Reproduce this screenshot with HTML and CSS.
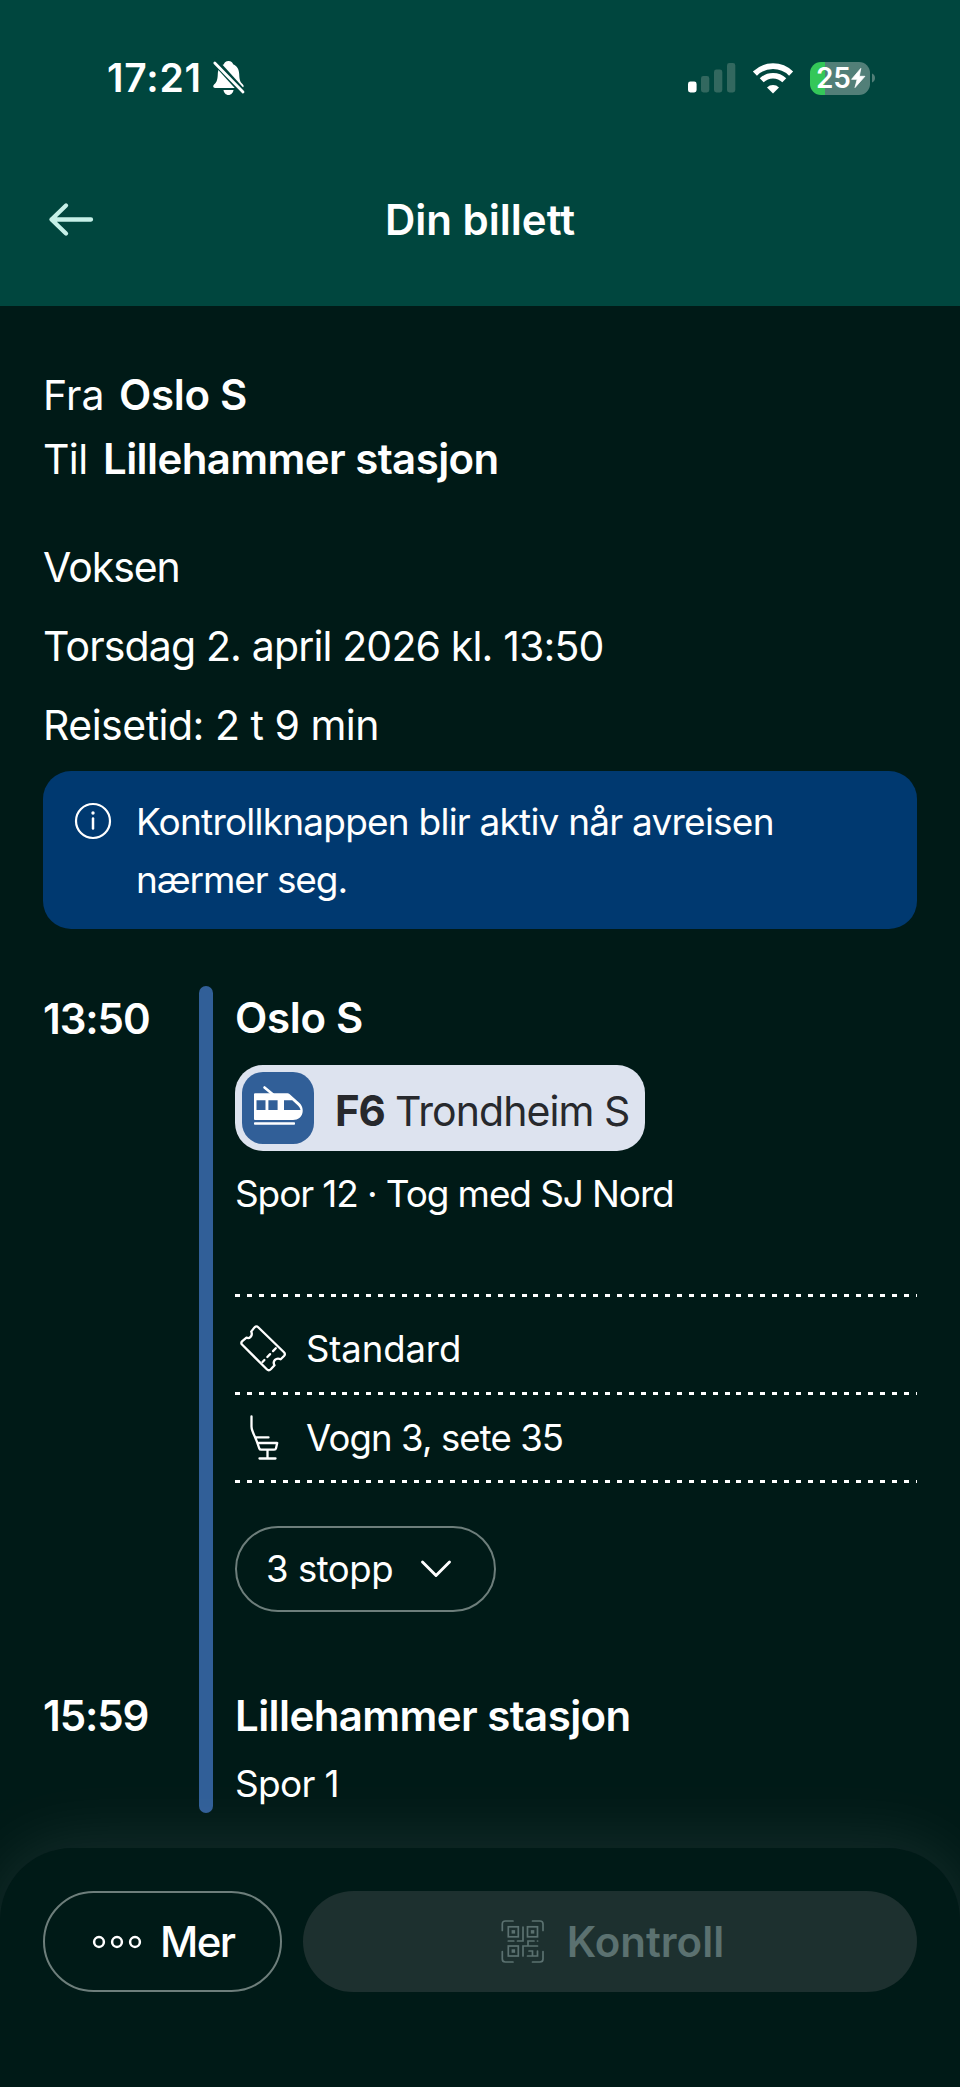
FILE: index.html
```html
<!DOCTYPE html>
<html lang="no">
<head>
<meta charset="utf-8">
<title>Din billett</title>
<link rel="stylesheet" href="styles.css">
</head>
<body>
<header class="header">
  <div class="status">
    <div class="status-left">
      <span class="clock">17:21</span>
      <svg class="bell" width="32" height="36" viewBox="0 0 32 36" fill="#fff">
        <path d="M15.5 1c-2.600 0-4.200 1.500-4.600 3.300C6.500 6 5 9.800 4.800 14c-.2 5.500-.9 8-3.500 10.300C-.5 26 .2 28 2 28h26.500c2 0 3-2 1.200-3.700C27 21.800 26.400 19.500 26.200 14 26 9.800 24.500 6 20.100 4.300 19.700 2.500 18.100 1 15.500 1zM10.500 30h10c-.3 2.800-2.400 5-5 5s-4.700-2.200-5-5z"/>
        <path d="M-1 2L28.500 34.500" transform="translate(1.500 -2.200)" stroke="#00463e" stroke-width="6.500" fill="none"/>
        <path d="M1.800 3L30 32" stroke="#fff" stroke-width="2.800" stroke-linecap="round"/>
      </svg>
    </div>
    <div class="status-right">
      <svg width="48" height="30" viewBox="0 0 48 30">
        <rect x="0" y="18.500" width="8.600" height="11" rx="2.400" fill="#fff"/>
        <g fill="#32685f"><rect x="13" y="13" width="8.300" height="16.500" rx="2.400"/><rect x="26" y="6.500" width="8.300" height="23" rx="2.400"/><rect x="39" y="0" width="8.300" height="29.500" rx="2.400"/></g>
      </svg>
      <svg class="wifi" width="42" height="32" viewBox="0 0 42 32" fill="none" stroke="#fff" stroke-width="6">
        <path d="M2.900 11.600a25.800 25.800 0 0 1 36.200 0" stroke-width="5.800"/>
        <path d="M9.700 18.300a16.200 16.200 0 0 1 22.600 0" stroke-width="5.600"/>
        <path d="M21 31.500l-6-6.100a8.500 8.500 0 0 1 12 0z" fill="#fff" stroke="none"/>
      </svg>
      <div class="battery">
        <span class="level">25</span>
        <svg width="15" height="20" viewBox="0 0 15 20" fill="#fff"><path d="M9.800.4L.6 11.300h5.600L4 19.600l9.900-11.300H8.300z" stroke="#fff" stroke-width=".8" stroke-linejoin="round"/></svg>
      </div>
      <svg class="nub" width="4" height="12" viewBox="0 0 4 12"><path d="M0 1.500c4 1.500 4 7.500 0 9z" fill="#527f78"/></svg>
    </div>
  </div>
  <div class="nav">
    <svg width="46" height="34" viewBox="0 0 46 34" fill="none" stroke="#c6f0e8" stroke-width="4.300" stroke-linecap="round" stroke-linejoin="round"><path d="M43 16.500H3.500M18 2.500L3.500 16.500l14.500 14"/></svg>
    <h1 class="title">Din billett</h1>
  </div>
</header>

<main class="main">
  <div class="place from"><span class="lead">Fra</span><strong class="stop">Oslo S</strong></div>
  <div class="place to"><span class="lead">Til</span><strong class="stop long">Lillehammer stasjon</strong></div>

  <div class="details">
    <p class="voksen">Voksen</p>
    <p class="date">Torsdag 2. april 2026 kl. 13:50</p>
    <p class="duration">Reisetid: 2 t 9 min</p>
  </div>

  <div class="notice">
    <svg width="38" height="38" viewBox="0 0 38 38" fill="none" stroke="#fff" stroke-width="2.200"><circle cx="19" cy="19" r="17"/><path d="M19 16.500v10" stroke-width="2.500" stroke-linecap="round"/><circle cx="19" cy="11" r="1.700" fill="#fff" stroke="none"/></svg>
    <p>Kontrollknappen blir aktiv når avreisen <span class="tight">nærmer seg.</span></p>
  </div>

  <section class="trip">
    <div class="times"><time>13:50</time><time>15:59</time></div>
    <div class="line"></div>
    <div class="leg">
      <h2 class="stop">Oslo S</h2>
      <div class="route">
        <svg width="72" height="72" viewBox="0 0 72 72">
          <rect width="72" height="72" rx="21" fill="#315f98"/>
          <path d="M22.500 15.500l8.500 7" stroke="#fff" stroke-width="2.600" stroke-linecap="round"/>
          <path fill="#fff" fill-rule="evenodd" d="M13 21.300h31.500c1.500 0 2.700.5 3.800 1.400l9.200 8.400c5.500 5 4.500 16.900-6.500 16.900H13a1 1 0 0 1-1-1V22.300a1 1 0 0 1 1-1zM14.500 28.300v9.700h9v-9.700zM26.400 28.300v9.700h9.200v-9.700zM42 28.300V38h16.500c-.4-1.800-1.300-3.300-2.600-4.500l-5.700-5.200z"/>
          <rect x="12" y="50.300" width="41" height="2.500" rx=".8" fill="#fff"/>
        </svg>
        <span class="route-name"><b>F6</b> Trondheim S</span>
      </div>
      <p class="info">Spor 12 · Tog med SJ Nord</p>
      <div class="rows">
        <div class="row standard">
          <svg width="54" height="52" viewBox="0 0 54 52" fill="none" stroke="#fff" stroke-width="2.300" stroke-linejoin="round" stroke-linecap="round"><path d="M7.300 18.200l4.200-3.600c2.500 1.500 6.800-1.500 4.700-6l3.300-4.200c1.200-1.400 2.700-1.200 3.700-.2L49 29.300c1.300 1.400 1 2.600 0 3.700l-3.300 3.300c-4.600-2.200-8.600 1.800-6.200 6l-3.700 4c-1.300 1.300-2.700 1.300-4 0L7 21.500c-1-1.200-.8-2.300.3-3.300z"/><path d="M41.500 24.500L27.500 39" stroke-dasharray="4 4.200" stroke-dashoffset="-1"/></svg>
          <span>Standard</span>
        </div>
        <div class="row seat">
          <svg width="54" height="46" viewBox="0 0 54 46" fill="none" stroke="#fff" stroke-width="2.300" stroke-linejoin="round" stroke-linecap="round"><path d="M16.500 1.500v10c0 1.500 1.800 7 3.500 10.500 3 7 3.300 9 4.300 11.500.3.800 1 1.200 1.800 1.200h13c1 0 1.700-.5 1.900-1.500l1.200-5.200H23M20.500 22.400h13M32.500 35v8.500M24.500 43.500h16"/></svg>
          <span>Vogn 3, sete 35</span>
        </div>
      </div>
      <button class="stops"><span>3 stopp</span><svg width="32" height="20" viewBox="0 0 32 20" fill="none" stroke="#fff" stroke-width="2.900" stroke-linecap="round" stroke-linejoin="round"><path d="M2.500 3L16 16.500 29.500 3"/></svg></button>
      <h2 class="stop long arrival">Lillehammer stasjon</h2>
      <p class="info platform">Spor 1</p>
    </div>
  </section>
</main>

<footer class="sheet">
  <button class="more"><svg width="50" height="14" viewBox="0 0 50 14" fill="none" stroke="#fff" stroke-width="2.500"><circle cx="7" cy="7" r="4.900"/><circle cx="25" cy="7" r="4.900"/><circle cx="43" cy="7" r="4.900"/></svg><span>Mer</span></button>
  <button class="control">
    <svg width="43" height="43" viewBox="0 0 43 43" fill="none" stroke="#5b7170" stroke-width="1.700" stroke-linecap="round"><path d="M1.300 10.500V4q0-3 3-3H12M31.500 1H39q3 0 3 3v6.500M1.300 31.500V39q0 3 3 3H12M31.500 42H39q3 0 3-3v-7.500"/><rect x="7.300" y="6.800" width="10" height="10"/><rect x="26.500" y="6.800" width="10" height="10"/><rect x="7.300" y="26" width="10" height="10"/><path d="M22 7v14h-5.500M7.300 21h5.500M36.500 21h.1M33 21h-6v5M22 36V26h14.500M28 31h3.500v5M26.500 36h10v-5"/><g fill="#5b7170" stroke="none"><rect x="10.600" y="10.100" width="3.500" height="3.500"/><rect x="29.800" y="10.100" width="3.500" height="3.500"/><rect x="10.600" y="29.300" width="3.500" height="3.500"/></g></svg>
    <span>Kontroll</span>
  </button>
</footer>
</body>
</html>
```
FILE: styles.css
```css
* { box-sizing: border-box; margin: 0; padding: 0; }
body {
  width: 960px;
  min-height: 2087px;
  overflow: hidden;
  background: #001a17;
  color: #fff;
  font-family: Inter, "Liberation Sans", sans-serif;
  font-size: 41px;
}
svg { display: block; flex: none; overflow: visible; }
button { font: inherit; color: inherit; background: none; border: 0; }

.header { height: 306px; background: #00463e; }
.status { height: 156px; display: flex; justify-content: space-between; align-items: center; padding: 0 84px 0 107px; }
.status-left, .status-right { display: flex; align-items: center; }
.clock { font-size: 39px; font-weight: 600; letter-spacing: .8px; line-height: 50px; }
.bell { margin-left: 11px; }
.wifi { margin-left: 16px; }
.battery {
  width: 60px; height: 33px; margin-left: 16px; padding-left: 6px;
  display: flex; align-items: center; gap: 1px;
  border-radius: 11px;
  background: linear-gradient(90deg, #34c759 15px, #527f78 15px);
}
.level { font-size: 28px; font-weight: 600; line-height: 33px; letter-spacing: -.3px; }
.nub { margin-left: 2px; }
.nav { height: 127px; display: grid; grid-template-columns: 46px 1fr 46px; align-items: center; padding: 0 48px; }
.title { font-size: 42px; font-weight: 600; text-align: center; line-height: 60px; }

.main { padding: 57px 43px 0; }
.place { display: flex; line-height: 64px; }
.lead { width: 76px; }
.to .lead { width: 60px; letter-spacing: -.6px; }
.stop { font-size: 42px; font-weight: 600; line-height: 64px; letter-spacing: -.3px; }
.long { letter-spacing: -.58px; }
.details { margin-top: 36.500px; line-height: 79px; }
.voksen { letter-spacing: -1.050px; }
.date { letter-spacing: -.85px; }
.duration { letter-spacing: -.5px; }

.notice {
  margin-top: 6.500px; height: 158px; padding: 22px 90px 0 31px;
  display: flex; gap: 24px;
  border-radius: 28px; background: #003970;
  font-size: 37px; line-height: 57.500px; letter-spacing: -.78px;
}
.notice svg { margin-top: 9px; }
.tight { letter-spacing: -1.1px; }

.trip { margin-top: 57px; display: grid; grid-template-columns: 156px 14px 1fr; height: 827px; }
.times { display: flex; flex-direction: column; justify-content: space-between; padding-top: 1px; padding-bottom: 65px; }
.times time { font-size: 42px; font-weight: 600; line-height: 64px; letter-spacing: -1.100px; }
.line { background: #315f98; border-radius: 7px; }
.leg { padding-left: 22px; }
.route {
  width: 410px; height: 86px; margin-top: 15px; padding-left: 7px;
  display: flex; align-items: center; gap: 21px;
  border-radius: 28px; background: #dde3ef; color: #27292d;
}
.route-name { padding-top: 6px; letter-spacing: -.95px; line-height: 64px; white-space: nowrap; }
.route-name b { font-size: 42px; font-weight: 700; letter-spacing: -1.2px; }
.info { margin-top: 18px; font-size: 37px; line-height: 50px; letter-spacing: -1.120px; }
.rows { margin-top: 75px; font-size: 36.500px; }
.row {
  display: flex; align-items: center; gap: 17px; height: 88px;
  background: repeating-linear-gradient(90deg, #fff 0 5px, transparent 5px 11.940px) top / 100% 3px no-repeat;
}
.row:first-child { height: 98px; padding-top: 12px; }
.standard { letter-spacing: -.1px; }
.seat { letter-spacing: -.88px; }
.row:last-child {
  height: 91px;
  background:
    repeating-linear-gradient(90deg, #fff 0 5px, transparent 5px 11.940px) top / 100% 3px no-repeat,
    repeating-linear-gradient(90deg, #fff 0 5px, transparent 5px 11.940px) bottom / 100% 3px no-repeat;
}
.stops {
  margin-top: 43px; width: 261px; height: 86px; padding-left: 29px;
  display: flex; align-items: center; gap: 27px;
  border: 2px solid #6d7e7b; border-radius: 43px;
  font-size: 36.500px; letter-spacing: -.45px;
}
.arrival { margin-top: 72px; }
.platform { margin-top: 10.500px; letter-spacing: -.7px; }

.sheet {
  position: relative;
  margin-top: 35px; height: 239px; padding: 43px;
  display: flex; gap: 21px;
  border-radius: 72px 72px 0 0; background: #001a17;
  box-shadow: 0 0 70px rgba(255, 255, 255, .1);
}
.more, .control { height: 101px; display: flex; align-items: center; border-radius: 51px; font-size: 42px; }
.more { width: 239px; padding-left: 47px; gap: 18px; border: 2px solid #6d7e7b; font-weight: 500; letter-spacing: -1.600px; }
.control { flex: 1; justify-content: center; gap: 23px; padding-left: 5px; background: #1d302f; color: #5b7170; font-weight: 600; }
```
